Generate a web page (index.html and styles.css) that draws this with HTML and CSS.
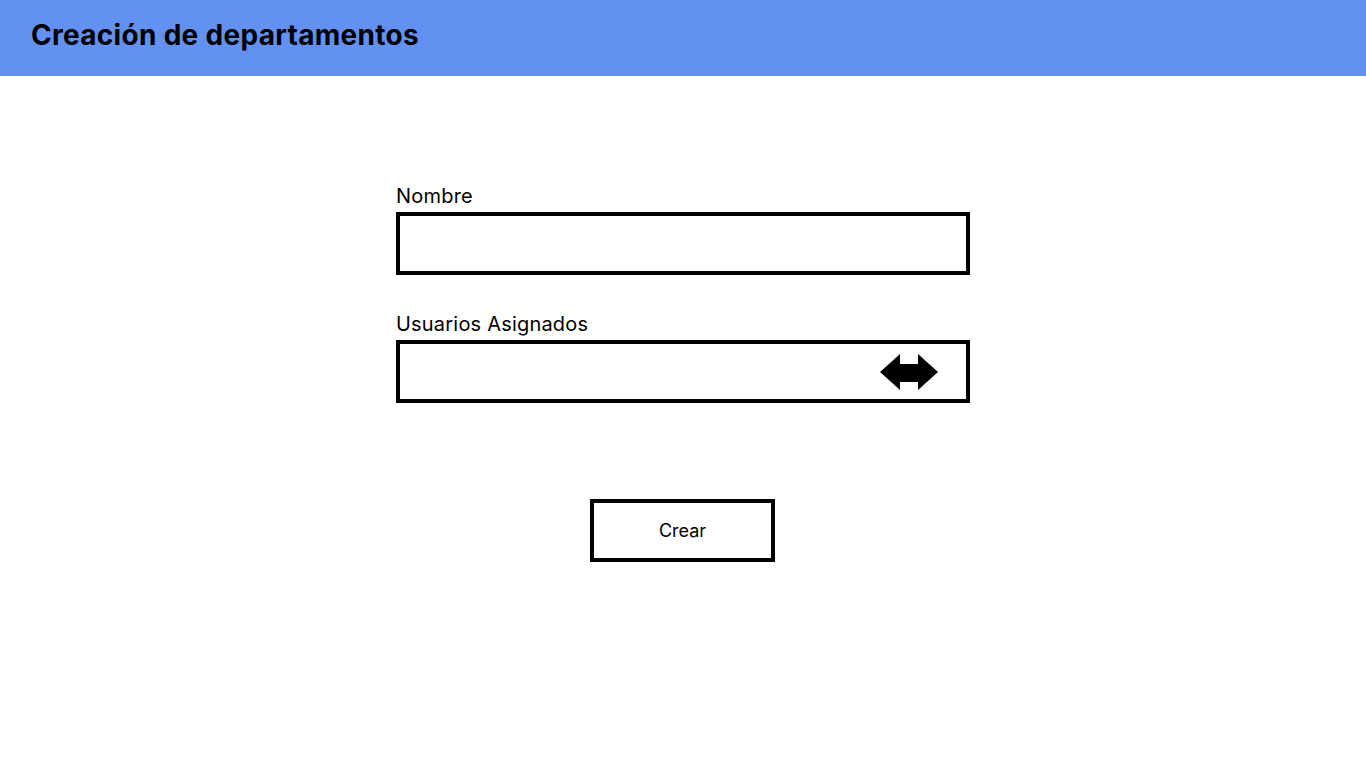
FILE: index.html
```html
<!DOCTYPE html>
<html lang="es">
<head>
<meta charset="utf-8">
<title>Creación de departamentos</title>
<link rel="stylesheet" href="styles.css">
</head>
<body>
<header class="topbar">
  <h1 class="title">Creación de departamentos</h1>
</header>
<main class="content">
  <form class="form">
    <div class="field">
      <label class="label" for="nombre">Nombre</label>
      <div class="box" id="nombre"></div>
    </div>
    <div class="field">
      <label class="label">Usuarios Asignados</label>
      <div class="box box-icon">
        <svg class="swap" width="58" height="38" viewBox="0 0 58 38" aria-hidden="true">
          <path d="M0 19 L20 1 L20 11 L38 11 L38 1 L58 19 L38 37 L38 29 L20 29 L20 37 Z" fill="#000"/>
        </svg>
      </div>
    </div>
    <div class="actions">
      <button type="button" class="btn">Crear</button>
    </div>
  </form>
</main>
</body>
</html>
```
FILE: styles.css
```css
html, body {
  margin: 0;
  padding: 0;
  background: #ffffff;
  font-family: Inter, "Liberation Sans", sans-serif;
  color: #000;
}
.topbar {
  height: 76px;
  background: #6291f2;
  display: flex;
  align-items: center;
  padding-left: 31px;
  box-sizing: border-box;
}
.title {
  margin: 0;
  font-size: 28px;
  font-weight: 700;
  letter-spacing: 0.3px;
  position: relative;
  top: -3px;
}
.content {
  display: flex;
  justify-content: center;
  padding-top: 109px;
}
.form {
  width: 574px;
  display: flex;
  flex-direction: column;
}
.field {
  display: flex;
  flex-direction: column;
  margin-bottom: 38px;
}
.label {
  font-size: 20px;
  line-height: 23px;
  letter-spacing: 0.2px;
  margin-bottom: 4px;
  font-weight: 400;
}
.box {
  height: 63px;
  border: 4px solid #000;
  box-sizing: border-box;
  display: flex;
  align-items: center;
}
.box-icon {
  justify-content: flex-end;
  padding-right: 28px;
}
.swap {
  display: block;
  margin-top: 1px;
}
.actions {
  display: flex;
  justify-content: center;
  margin-top: 58px;
}
.btn {
  width: 185px;
  height: 63px;
  border: 4px solid #000;
  background: #fff;
  font-family: Inter, "Liberation Sans", sans-serif;
  font-size: 18px;
  color: #000;
  padding: 0;
  margin-right: 1px;
}
```
